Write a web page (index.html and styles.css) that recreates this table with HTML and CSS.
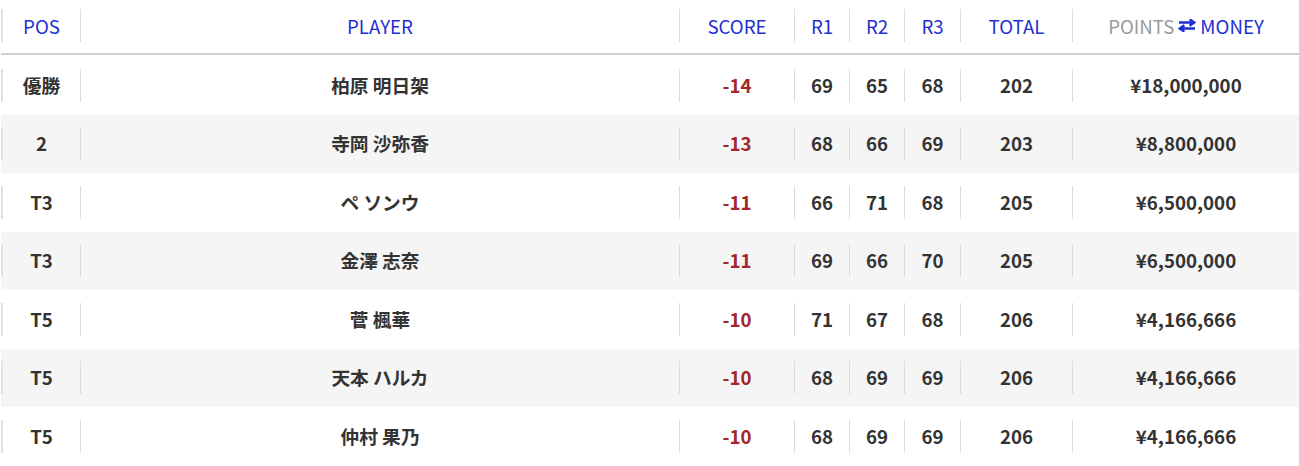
FILE: index.html
```html
<!DOCTYPE html>
<html lang="ja">
<head>
<meta charset="utf-8">
<link rel="stylesheet" href="styles.css">
</head>
<body>
<div class="board">
  <div class="row head">
    <div class="cell c-pos"><div class="in">POS</div></div>
    <div class="cell c-player"><div class="in">PLAYER</div></div>
    <div class="cell c-score"><div class="in">SCORE</div></div>
    <div class="cell c-r1"><div class="in">R1</div></div>
    <div class="cell c-r2"><div class="in">R2</div></div>
    <div class="cell c-r3"><div class="in">R3</div></div>
    <div class="cell c-total"><div class="in">TOTAL</div></div>
    <div class="cell c-money"><div class="in"><span class="muted">POINTS</span><svg class="swap" width="18" height="13" viewBox="0 0 18 13"><path d="M1 3.5H15M11.6 0.3L16.2 3.5L11.6 6.7" fill="none" stroke="#1f2fd3" stroke-width="2.5"/><path d="M17 9.5H3M6.4 6.3L1.8 9.5L6.4 12.7" fill="none" stroke="#1f2fd3" stroke-width="2.5"/></svg><span>MONEY</span></div></div>
  </div>
  <div class="row">
    <div class="cell c-pos"><div class="in">優勝</div></div>
    <div class="cell c-player"><div class="in">柏原 明日架</div></div>
    <div class="cell c-score"><div class="in red">-14</div></div>
    <div class="cell c-r1"><div class="in">69</div></div>
    <div class="cell c-r2"><div class="in">65</div></div>
    <div class="cell c-r3"><div class="in">68</div></div>
    <div class="cell c-total"><div class="in">202</div></div>
    <div class="cell c-money"><div class="in">¥18,000,000</div></div>
  </div>
  <div class="row alt">
    <div class="cell c-pos"><div class="in">2</div></div>
    <div class="cell c-player"><div class="in">寺岡 沙弥香</div></div>
    <div class="cell c-score"><div class="in red">-13</div></div>
    <div class="cell c-r1"><div class="in">68</div></div>
    <div class="cell c-r2"><div class="in">66</div></div>
    <div class="cell c-r3"><div class="in">69</div></div>
    <div class="cell c-total"><div class="in">203</div></div>
    <div class="cell c-money"><div class="in">¥8,800,000</div></div>
  </div>
  <div class="row">
    <div class="cell c-pos"><div class="in">T3</div></div>
    <div class="cell c-player"><div class="in">ペ ソンウ</div></div>
    <div class="cell c-score"><div class="in red">-11</div></div>
    <div class="cell c-r1"><div class="in">66</div></div>
    <div class="cell c-r2"><div class="in">71</div></div>
    <div class="cell c-r3"><div class="in">68</div></div>
    <div class="cell c-total"><div class="in">205</div></div>
    <div class="cell c-money"><div class="in">¥6,500,000</div></div>
  </div>
  <div class="row alt">
    <div class="cell c-pos"><div class="in">T3</div></div>
    <div class="cell c-player"><div class="in">金澤 志奈</div></div>
    <div class="cell c-score"><div class="in red">-11</div></div>
    <div class="cell c-r1"><div class="in">69</div></div>
    <div class="cell c-r2"><div class="in">66</div></div>
    <div class="cell c-r3"><div class="in">70</div></div>
    <div class="cell c-total"><div class="in">205</div></div>
    <div class="cell c-money"><div class="in">¥6,500,000</div></div>
  </div>
  <div class="row">
    <div class="cell c-pos"><div class="in">T5</div></div>
    <div class="cell c-player"><div class="in">菅 楓華</div></div>
    <div class="cell c-score"><div class="in red">-10</div></div>
    <div class="cell c-r1"><div class="in">71</div></div>
    <div class="cell c-r2"><div class="in">67</div></div>
    <div class="cell c-r3"><div class="in">68</div></div>
    <div class="cell c-total"><div class="in">206</div></div>
    <div class="cell c-money"><div class="in">¥4,166,666</div></div>
  </div>
  <div class="row alt">
    <div class="cell c-pos"><div class="in">T5</div></div>
    <div class="cell c-player"><div class="in">天本 ハルカ</div></div>
    <div class="cell c-score"><div class="in red">-10</div></div>
    <div class="cell c-r1"><div class="in">68</div></div>
    <div class="cell c-r2"><div class="in">69</div></div>
    <div class="cell c-r3"><div class="in">69</div></div>
    <div class="cell c-total"><div class="in">206</div></div>
    <div class="cell c-money"><div class="in">¥4,166,666</div></div>
  </div>
  <div class="row">
    <div class="cell c-pos"><div class="in">T5</div></div>
    <div class="cell c-player"><div class="in">仲村 果乃</div></div>
    <div class="cell c-score"><div class="in red">-10</div></div>
    <div class="cell c-r1"><div class="in">68</div></div>
    <div class="cell c-r2"><div class="in">69</div></div>
    <div class="cell c-r3"><div class="in">69</div></div>
    <div class="cell c-total"><div class="in">206</div></div>
    <div class="cell c-money"><div class="in">¥4,166,666</div></div>
  </div>
</div>
</body>
</html>
```
FILE: styles.css
```css
* { box-sizing: border-box; }
html, body { margin: 0; padding: 0; background: #fff; }
body {
  font-family: "Noto Sans CJK JP", "Noto Sans", sans-serif;
  font-size: 18.7px;
  color: #333;
  overflow: hidden;
}
.board {
  width: 1299px;
  padding-left: 1px;
}
.row {
  display: flex;
  height: 58.5px;
  font-weight: 700;
}
.row.alt { background: #f5f5f5; }
.row.head {
  height: 55px;
  border-bottom: 2px solid #cfcfcf;
  font-weight: 400;
  color: #1f2fd3;
  align-items: flex-start;
  padding-top: 9px;
  margin-bottom: 1px;
}
.row.head .in { padding-top: 2px; }
.cell {
  display: flex;
  align-items: center;
  flex: none;
}
.in {
  flex: 1;
  height: 33px;
  border-left: 1px solid #dcdcdc;
  display: flex;
  align-items: center;
  justify-content: center;
  line-height: 1;
}
.c-pos { width: 79px; }
.c-pos .in { border-left-width: 2px; border-left-color: #e2e2e2; }
.c-player { width: 599px; }
.c-score { width: 115px; }
.c-r1 { width: 55px; }
.c-r2 { width: 55px; }
.c-r3 { width: 56px; }
.c-total { width: 112px; }
.c-money { width: 227px; }
.red { color: #a3262a; }
.muted { color: #9a9a9a; }
.swap { margin: 0 4px 3px 4px; flex: none; }
```
